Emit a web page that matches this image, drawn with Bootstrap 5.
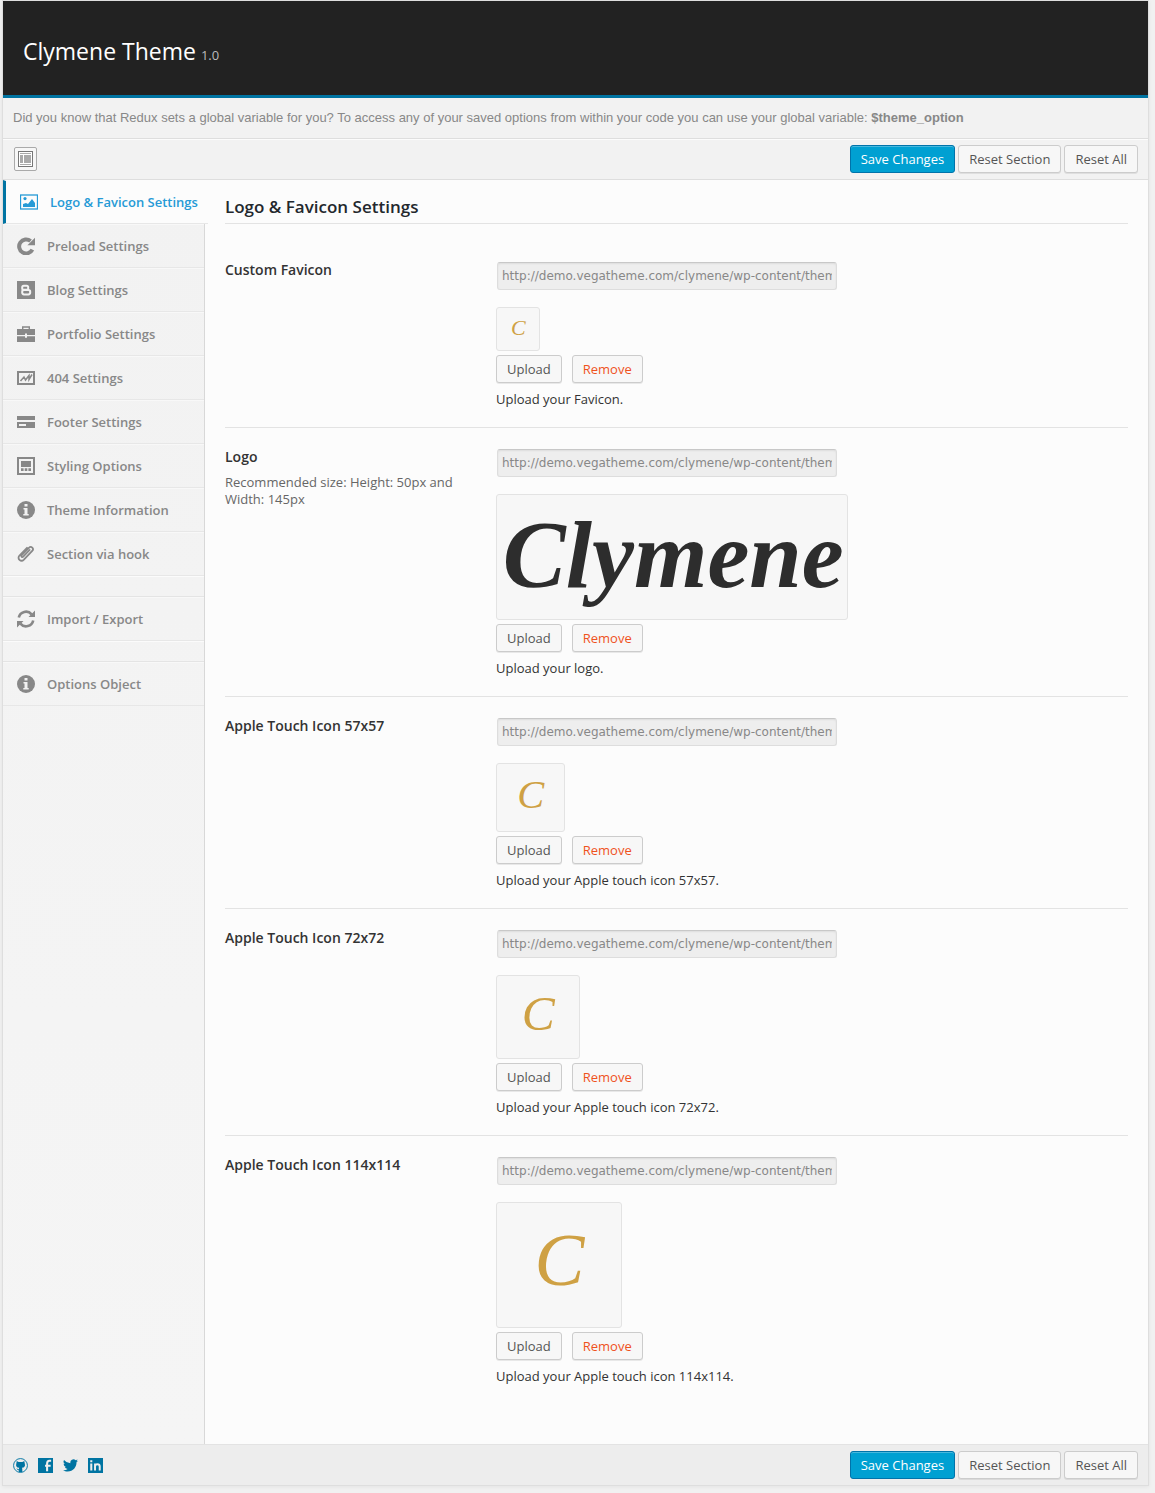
<!DOCTYPE html>
<html lang="en">
<head>
<meta charset="utf-8">
<meta name="viewport" content="width=device-width, initial-scale=1">
<title>Clymene Theme</title>
<link href="https://cdn.jsdelivr.net/npm/bootstrap@5.3.0/dist/css/bootstrap.min.css" rel="stylesheet">
<style>
body{background:#f1f1f1;font-family:"Open Sans",sans-serif;font-size:13px;line-height:20px;color:#333}
.panel{margin:0 6px 7px 2px;border:1px solid #dedede;box-shadow:0 1px 4px rgba(0,0,0,.06)}
.panel-head{background:#222;border-bottom:3px solid #0074a2;padding:34px 20px 24px;color:#fff}
.panel-head h1{font-size:23px;line-height:32px;font-weight:400}
.version{font-size:13px;color:#bbb;margin-left:-1px}
.intro{background:#f2f2f2;border-bottom:1px solid #dedede;padding:10px;font-family:"Liberation Sans",Arial,sans-serif;color:#888}
.bar{padding:6px 10px}
.bar-top{background:#f2f2f2;border-top:1px solid #fcfcfc;border-bottom:1px solid #dedede;padding-top:5px}
.bar-foot{background:#ededed;border-top:1px solid #e3e3e3}
.bar-buttons{gap:3px}
.tool{width:23px;height:24px;border:1px solid #aaa;border-radius:2px;background:#f7f7f7;margin-left:1px}
.btn-wp{--bs-btn-font-size:13px;--bs-btn-line-height:26px;--bs-btn-padding-y:0;--bs-btn-padding-x:10px;--bs-btn-border-radius:3px;--bs-btn-color:#555;--bs-btn-bg:#f7f7f7;--bs-btn-border-color:#ccc;--bs-btn-hover-color:#222;--bs-btn-hover-bg:#fafafa;--bs-btn-hover-border-color:#999;box-shadow:0 1px 0 rgba(0,0,0,.08)}
.btn-save{--bs-btn-color:#fff;--bs-btn-bg:#00a0d2;--bs-btn-border-color:#0073aa;--bs-btn-hover-color:#fff;--bs-btn-hover-bg:#0091cd;--bs-btn-hover-border-color:#0073aa;box-shadow:inset 0 1px 0 rgba(120,200,230,.6)}
.btn-del{--bs-btn-color:#ef521d;--bs-btn-hover-color:#c00}
.body-area{background:#fcfcfc}
.side{width:202px;background:linear-gradient(#f2f2f2,#f5f5f5);border-right:1px solid #d8d8d8}
.side .nav-link{height:44px;padding:0 0 0 14px;gap:12px;font-weight:600;color:#888;border-bottom:1px solid #e7e7e7;border-top:1px solid #f8f8f8;white-space:nowrap}
.side .nav-link:hover{color:#555}
.side .nav-link.active{color:#269ad6;background:#fcfcfc;border-left:3px solid #0074a2;border-top-color:#fcfcfc;margin-right:-4px;position:relative}
.side .nav-link svg{width:18px;height:18px;flex:none}
.side .gap-item{height:21px;border-bottom:1px solid #e4e4e4;border-top:1px solid #fbfbfb}
.main-col{padding:18px 20px 40px;min-width:0}
.main-col h2{font-size:17px;line-height:18px;font-weight:600;color:#23282d;padding-bottom:7px;border-bottom:1px solid #e3e3e3;margin-bottom:17px}
.field{padding:21px 0 18px;border-bottom:1px solid #e3e3e3}
.field:last-child{border-bottom:0}
.field-name{width:271px;padding-right:30px;flex:none}
.field-name label{display:block;font-size:14px;line-height:16px;font-weight:600;color:#333}
.field-name p{margin:9px 0 0;line-height:17px;color:#666}
.url{width:340px;max-width:100%;height:28px;padding:0 4px;margin:0 0 17px 1px;font-family:"DejaVu Sans",sans-serif;font-size:12px;line-height:26px;color:#888;background:#eee;border:1px solid #ddd;border-top-color:#c8c8c8;border-radius:3px;box-shadow:inset 0 1px 2px rgba(0,0,0,.07);display:block}
.shot{display:block;background:#f7f7f7;border:1px solid #e3e3e3;border-radius:3px;margin-bottom:4px;max-width:100%}
.shot text{font-family:"Liberation Serif",serif;font-style:italic}
.hint{margin:6px 0 0}
.social,.field-buttons{gap:10px}
.social a{color:#0074a2;display:block;line-height:0}
</style>
</head>
<body>
<svg class="d-none" xmlns="http://www.w3.org/2000/svg">
<symbol id="i-image" viewBox="0 0 18 18"><rect x=".5" y="2" width="17" height="14" fill="none" stroke="currentColor" stroke-width="1.3"/><circle cx="5" cy="5.6" r="1.6"/><path d="M3 14v-3l3-1 2 1 4-5 3 4v4z"/></symbol>
<symbol id="i-reload" viewBox="0 0 18 18"><path d="M15.4 12.6A7 7 0 1 1 13.6 4" fill="none" stroke="currentColor" stroke-width="4"/><path d="M18 .8v7.4h-7.6z"/></symbol>
<symbol id="i-blog" viewBox="0 0 18 18"><rect width="18" height="18"/><rect x="5.2" y="4.8" width="6" height="4" rx="1.6" fill="none" stroke="#f2f2f2" stroke-width="2"/><rect x="5.2" y="9" width="8" height="4.4" rx="1.8" fill="none" stroke="#f2f2f2" stroke-width="2"/></symbol>
<symbol id="i-case" viewBox="0 0 18 18"><path d="M5.7 4V2h6.6v2" fill="none" stroke="currentColor" stroke-width="1.4"/><path d="M0 4h18v6h-8V8.6H8V10H0zM0 11.3h8v1.4h2v-1.4h8V17H0z"/></symbol>
<symbol id="i-graph" viewBox="0 0 18 18"><rect x="1" y="3" width="16" height="12" fill="none" stroke="currentColor" stroke-width="2"/><path d="M3.5 12 7 8l1.5 3L12 6.500v4l3-5" fill="none" stroke="currentColor" stroke-width="1.5"/></symbol>
<symbol id="i-card" viewBox="0 0 18 18"><path d="M0 3h18v4H0zM0 9h18v6H0z"/><path d="M2 11h7v2H2z" fill="#f2f2f2"/></symbol>
<symbol id="i-style" viewBox="0 0 18 18"><rect x="1" y="1" width="16" height="16" fill="none" stroke="currentColor" stroke-width="2"/><path d="M4 4h10v6H4zM4 11.300h2.600V14H4zM7.700 11.300h2.600V14H7.700zM11.400 11.300H14V14h-2.600z"/></symbol>
<symbol id="i-info" viewBox="0 0 18 18"><circle cx="9" cy="9" r="9"/><path d="M7.500 3h3v2.600h-3zM6.500 7h4v6h1.200v1.500H6.300V13h1.200V8.400h-1z" fill="#f2f2f2"/></symbol>
<symbol id="i-clip" viewBox="0 0 18 18"><path d="m12.600 5-6.400 6.700c-1 1-2.500-.4-1.500-1.500l7.200-7.400c2.300-2.300 5.500.7 3.300 3.100l-8.300 8.700c-3 3-7.300-1-4.400-4.100L10 2.800" fill="none" stroke="currentColor" stroke-width="1.800" stroke-linecap="round"/></symbol>
<symbol id="i-sync" viewBox="0 0 18 18"><path d="M1.800 7.600A7.300 7.300 0 0 1 14.600 4.400M16.200 10.400A7.300 7.300 0 0 1 3.400 13.600" fill="none" stroke="currentColor" stroke-width="2.600"/><path d="M18 .5V7h-6.500zM0 17.500V11h6.500z"/></symbol>
</svg>

<form class="panel">
<header class="panel-head">
<h1 class="mb-0">Clymene Theme <span class="version">1.0</span></h1>
</header>
<div class="intro">Did you know that Redux sets a global variable for you? To access any of your saved options from within your code you can use your global variable: <strong>$theme_option</strong></div>
<div class="bar bar-top d-flex justify-content-between align-items-center">
<button type="button" class="tool p-0 d-flex align-items-center justify-content-center" aria-label="Expand options">
<svg width="17" height="18" viewBox="0 0 17 18"><rect x="1.500" y="1.500" width="14" height="15" fill="#fff" stroke="#777"/><path d="M3 3.500h11M3 14.500h11" stroke="#aaa"/><path d="M3 5h3v8H3zM7 5h7v8H7z" fill="#aaa"/></svg>
</button>
<div class="d-flex bar-buttons">
<button type="submit" class="btn btn-wp btn-save">Save Changes</button>
<button type="button" class="btn btn-wp">Reset Section</button>
<button type="button" class="btn btn-wp">Reset All</button>
</div>
</div>

<div class="body-area d-flex">
<nav class="side flex-shrink-0 nav flex-column flex-nowrap" aria-label="Sections">
<a class="nav-link active d-flex align-items-center" href="#"><svg fill="currentColor"><use href="#i-image"/></svg>Logo &amp; Favicon Settings</a>
<a class="nav-link d-flex align-items-center" href="#"><svg fill="currentColor"><use href="#i-reload"/></svg>Preload Settings</a>
<a class="nav-link d-flex align-items-center" href="#"><svg fill="currentColor"><use href="#i-blog"/></svg>Blog Settings</a>
<a class="nav-link d-flex align-items-center" href="#"><svg fill="currentColor"><use href="#i-case"/></svg>Portfolio Settings</a>
<a class="nav-link d-flex align-items-center" href="#"><svg fill="currentColor"><use href="#i-graph"/></svg>404 Settings</a>
<a class="nav-link d-flex align-items-center" href="#"><svg fill="currentColor"><use href="#i-card"/></svg>Footer Settings</a>
<a class="nav-link d-flex align-items-center" href="#"><svg fill="currentColor"><use href="#i-style"/></svg>Styling Options</a>
<a class="nav-link d-flex align-items-center" href="#"><svg fill="currentColor"><use href="#i-info"/></svg>Theme Information</a>
<a class="nav-link d-flex align-items-center" href="#"><svg fill="currentColor"><use href="#i-clip"/></svg>Section via hook</a>
<div class="gap-item"></div>
<a class="nav-link d-flex align-items-center" href="#"><svg fill="currentColor"><use href="#i-sync"/></svg>Import / Export</a>
<div class="gap-item"></div>
<a class="nav-link d-flex align-items-center" href="#"><svg fill="currentColor"><use href="#i-info"/></svg>Options Object</a>
</nav>

<main class="main-col flex-grow-1">
<h2>Logo &amp; Favicon Settings</h2>

<section class="field d-flex">
<div class="field-name"><label for="favicon">Custom Favicon</label></div>
<div class="flex-grow-1">
<input class="url" id="favicon" type="text" readonly value="http://demo.vegatheme.com/clymene/wp-content/themes">
<svg class="shot" width="44" height="44" viewBox="0 0 126 126" role="img" aria-label="Favicon"><text x="42" y="80" font-size="66" fill="#cfa144">C</text></svg>
<div class="d-flex field-buttons"><button type="button" class="btn btn-wp">Upload</button><button type="button" class="btn btn-wp btn-del">Remove</button></div>
<p class="hint">Upload your Favicon.</p>
</div>
</section>

<section class="field d-flex">
<div class="field-name"><label for="logo">Logo</label><p>Recommended size: Height: 50px and Width: 145px</p></div>
<div class="flex-grow-1">
<input class="url" id="logo" type="text" readonly value="http://demo.vegatheme.com/clymene/wp-content/themes">
<svg class="shot" width="352" height="126" viewBox="0 0 352 126" role="img" aria-label="Clymene logo"><text x="4" y="93" font-size="96" font-weight="700" fill="#2d2d2d">Clymene</text></svg>
<div class="d-flex field-buttons"><button type="button" class="btn btn-wp">Upload</button><button type="button" class="btn btn-wp btn-del">Remove</button></div>
<p class="hint">Upload your logo.</p>
</div>
</section>

<section class="field d-flex">
<div class="field-name"><label for="touch57">Apple Touch Icon 57x57</label></div>
<div class="flex-grow-1">
<input class="url" id="touch57" type="text" readonly value="http://demo.vegatheme.com/clymene/wp-content/themes">
<svg class="shot" width="69" height="69" viewBox="0 0 126 126" role="img" aria-label="Touch icon"><text x="38" y="83" font-size="76" fill="#cfa144">C</text></svg>
<div class="d-flex field-buttons"><button type="button" class="btn btn-wp">Upload</button><button type="button" class="btn btn-wp btn-del">Remove</button></div>
<p class="hint">Upload your Apple touch icon 57x57.</p>
</div>
</section>

<section class="field d-flex">
<div class="field-name"><label for="touch72">Apple Touch Icon 72x72</label></div>
<div class="flex-grow-1">
<input class="url" id="touch72" type="text" readonly value="http://demo.vegatheme.com/clymene/wp-content/themes">
<svg class="shot" width="84" height="84" viewBox="0 0 126 126" role="img" aria-label="Touch icon"><text x="38" y="83" font-size="76" fill="#cfa144">C</text></svg>
<div class="d-flex field-buttons"><button type="button" class="btn btn-wp">Upload</button><button type="button" class="btn btn-wp btn-del">Remove</button></div>
<p class="hint">Upload your Apple touch icon 72x72.</p>
</div>
</section>

<section class="field d-flex">
<div class="field-name"><label for="touch114">Apple Touch Icon 114x114</label></div>
<div class="flex-grow-1">
<input class="url" id="touch114" type="text" readonly value="http://demo.vegatheme.com/clymene/wp-content/themes">
<svg class="shot" width="126" height="126" viewBox="0 0 126 126" role="img" aria-label="Touch icon"><text x="38" y="83" font-size="76" fill="#cfa144">C</text></svg>
<div class="d-flex field-buttons"><button type="button" class="btn btn-wp">Upload</button><button type="button" class="btn btn-wp btn-del">Remove</button></div>
<p class="hint">Upload your Apple touch icon 114x114.</p>
</div>
</section>
</main>
</div>

<footer class="bar bar-foot d-flex justify-content-between align-items-center">
<div class="social d-flex">
<a href="#" aria-label="GitHub"><svg width="15" height="15" viewBox="0 0 16 16"><circle cx="8" cy="8" r="7.400" fill="none" stroke="currentColor"/><path fill="currentColor" d="M4 3.300 6 4.200h4l2-.9.500 2.200c1 3-.3 4.700-3 5l.4 1V15H6.200v-2c-1.700.3-1.700-1.200-2.600-1.700 1.200-.2 1.500 1 2.600.8l.4-1.600c-2.700-.3-4-2-3-5z"/></svg></a>
<a href="#" aria-label="Facebook"><svg width="15" height="15" viewBox="0 0 16 16"><path fill="currentColor" d="M0 0h16v16H0z"/><path d="M9.700 14V6c0-2 1-3 2.500-3H14M7.500 8.300h6" fill="none" stroke="#ededed" stroke-width="2.200"/></svg></a>
<a href="#" aria-label="Twitter"><svg width="15" height="15" viewBox="0 0 16 16"><path fill="currentColor" d="M5 14.500c6 0 9.400-5 9.400-9.400V4.600A6.500 6.500 0 0 0 16 3l-1.900.5A3.300 3.300 0 0 0 15.500 1.700l-2 .8A3.300 3.300 0 0 0 7.900 5.500 9.300 9.300 0 0 1 1.100 2a3.300 3.300 0 0 0 1 4.400L.6 6a3.300 3.300 0 0 0 2.600 3.200l-1.400.1A3.300 3.300 0 0 0 4.900 11.600 6.600 6.600 0 0 1 0 13c1.500 1 3.200 1.500 5 1.500z"/></svg></a>
<a href="#" aria-label="LinkedIn"><svg width="15" height="15" viewBox="0 0 16 16"><path fill="currentColor" d="M0 0h16v16H0z"/><path d="M2.400 2.400h2.200v2H2.400zM2.400 5.800h2.200v7.500H2.400z" fill="#ededed"/><path d="M7.500 13.300V5.800M7.500 9c0-3 5-3 5 0v4.300" fill="none" stroke="#ededed" stroke-width="2.100"/></svg></a>
</div>
<div class="d-flex bar-buttons">
<button type="submit" class="btn btn-wp btn-save">Save Changes</button>
<button type="button" class="btn btn-wp">Reset Section</button>
<button type="button" class="btn btn-wp">Reset All</button>
</div>
</footer>
</form>
<script src="https://cdn.jsdelivr.net/npm/bootstrap@5.3.0/dist/js/bootstrap.bundle.min.js"></script>
</body>
</html>
